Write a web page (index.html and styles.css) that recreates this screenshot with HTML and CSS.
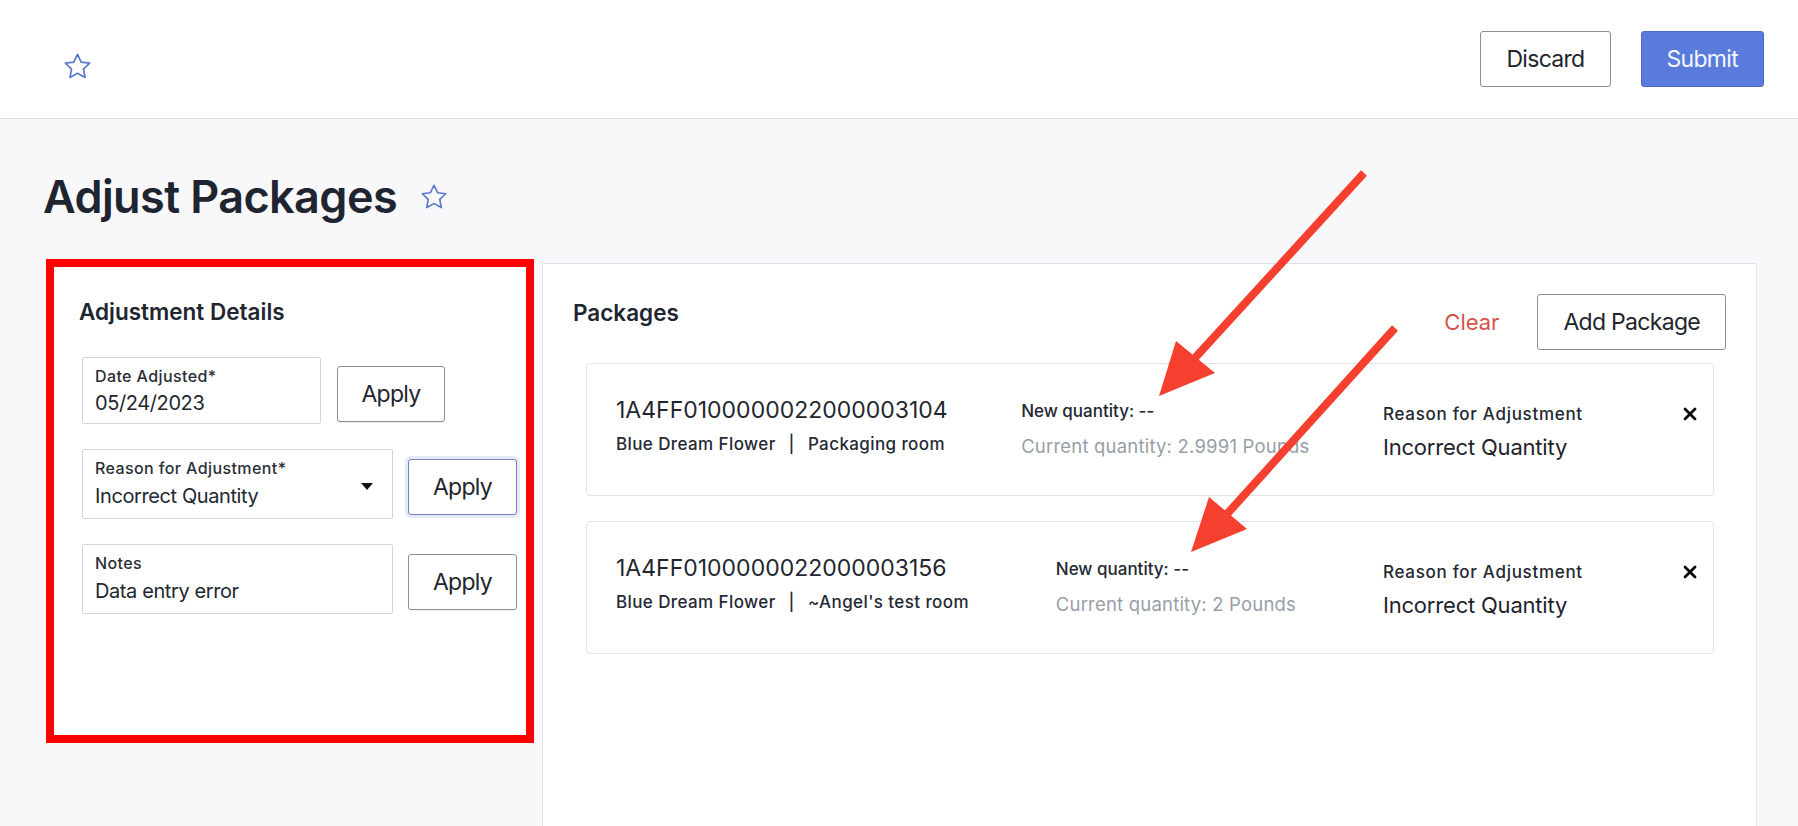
FILE: index.html
```html
<!DOCTYPE html>
<html lang="en">
<head>
<meta charset="utf-8">
<title>Adjust Packages</title>
<link rel="stylesheet" href="styles.css">
</head>
<body>
<header class="topbar">
  <button class="icon-btn topbar-star" aria-label="Favorite">
    <svg viewBox="0 0 24 24" width="31" height="31"><path class="star-path" d="M12 2.6l2.85 5.95 6.55.85-4.8 4.55 1.25 6.5L12 17.3l-5.85 3.15 1.25-6.5-4.8-4.55 6.55-.85z"/></svg>
  </button>
  <div class="topbar-actions">
    <button class="btn btn-outline">Discard</button>
    <button class="btn btn-primary">Submit</button>
  </div>
</header>

<main class="page">
  <div class="title-row">
    <h1 class="page-title">Adjust Packages</h1>
    <svg class="title-star" viewBox="0 0 24 24" width="30" height="30"><path class="star-path" d="M12 2.6l2.85 5.95 6.55.85-4.8 4.55 1.25 6.5L12 17.3l-5.85 3.15 1.25-6.5-4.8-4.55 6.55-.85z"/></svg>
  </div>

  <div class="columns">
    <section class="details-card">
      <h2 class="section-title">Adjustment Details</h2>

      <div class="field-row field-row-first">
        <div class="field field-short">
          <div class="field-label">Date Adjusted*</div>
          <div class="field-value">05/24/2023</div>
        </div>
        <button class="btn btn-apply btn-apply-narrow">Apply</button>
      </div>

      <div class="field-row">
        <div class="field field-wide field-select">
          <div class="field-label">Reason for Adjustment*</div>
          <div class="field-value">Incorrect Quantity</div>
          <span class="caret"></span>
        </div>
        <button class="btn btn-apply btn-focused">Apply</button>
      </div>

      <div class="field-row">
        <div class="field field-wide">
          <div class="field-label">Notes</div>
          <div class="field-value">Data entry error</div>
        </div>
        <button class="btn btn-apply">Apply</button>
      </div>
    </section>

    <section class="packages-panel">
      <div class="packages-head">
        <h2 class="section-title packages-title">Packages</h2>
        <div class="head-actions">
          <button class="link-clear">Clear</button>
          <button class="btn btn-outline">Add Package</button>
        </div>
      </div>

      <div class="package-list">
        <div class="package-card">
          <div class="pkg-main">
            <div class="pkg-id-block">
              <div class="pkg-id">1A4FF0100000022000003104</div>
              <div class="pkg-sub">Blue Dream Flower<span class="pkg-sep">|</span>Packaging room</div>
            </div>
            <div class="pkg-qty-block">
              <div class="pkg-new">New quantity: --</div>
              <div class="pkg-current">Current quantity: 2.9991 Pounds</div>
            </div>
            <div class="pkg-reason-block">
              <div class="pkg-reason-label">Reason for Adjustment</div>
              <div class="pkg-reason-value">Incorrect Quantity</div>
            </div>
          </div>
          <button class="icon-btn pkg-remove" aria-label="Remove">
            <svg viewBox="0 0 14 14" width="14" height="14"><path d="M2 2L12 12M12 2L2 12" class="x-path"/></svg>
          </button>
        </div>

        <div class="package-card">
          <div class="pkg-main">
            <div class="pkg-id-block">
              <div class="pkg-id">1A4FF0100000022000003156</div>
              <div class="pkg-sub">Blue Dream Flower<span class="pkg-sep">|</span>~Angel's test room</div>
            </div>
            <div class="pkg-qty-block">
              <div class="pkg-new">New quantity: --</div>
              <div class="pkg-current">Current quantity: 2 Pounds</div>
            </div>
            <div class="pkg-reason-block">
              <div class="pkg-reason-label">Reason for Adjustment</div>
              <div class="pkg-reason-value">Incorrect Quantity</div>
            </div>
          </div>
          <button class="icon-btn pkg-remove" aria-label="Remove">
            <svg viewBox="0 0 14 14" width="14" height="14"><path d="M2 2L12 12M12 2L2 12" class="x-path"/></svg>
          </button>
        </div>
      </div>
    </section>
  </div>
</main>

<svg class="annotations" viewBox="0 0 1798 826" width="1798" height="826" aria-hidden="true">
  <line x1="1364" y1="173" x2="1194" y2="359" class="arrow-shaft"/>
  <polygon points="1159,396 1176,341 1215,373" class="arrow-head"/>
  <line x1="1395" y1="328" x2="1227" y2="514" class="arrow-shaft"/>
  <polygon points="1191,552 1209,497 1247,529" class="arrow-head"/>
</svg>
</body>
</html>
```

FILE: styles.css
```css
* { box-sizing: border-box; }

html, body {
  margin: 0;
  padding: 0;
  height: 100%;
  overflow: hidden;
}

body {
  font-family: Inter, "Noto Sans", "Liberation Sans", sans-serif;
  background: #f8f8fa;
  color: #22262f;
  position: relative;
}

button {
  font-family: inherit;
  cursor: pointer;
}

.icon-btn {
  background: none;
  border: 0;
  padding: 0;
  display: flex;
  align-items: center;
  justify-content: center;
}

.star-path {
  fill: none;
  stroke: #5a78c9;
  stroke-width: 1.3;
  stroke-linejoin: round;
}

/* Top bar */
.topbar {
  height: 119px;
  background: #ffffff;
  border-bottom: 1px solid #dcdde1;
  display: flex;
  align-items: center;
  justify-content: space-between;
  padding: 0 34px 0 62px;
}

.topbar-star {
  margin-top: 14px;
}

.topbar-actions {
  display: flex;
  gap: 30px;
}

.btn {
  height: 56px;
  padding: 0 25px;
  font-size: 23px;
  font-weight: 400;
  border-radius: 3px;
  background: #ffffff;
  color: #21252d;
  border: 1px solid #8b8f96;
  letter-spacing: -0.7px;
}

.btn-primary {
  background: #5a7bdb;
  border-color: #4b69c6;
  color: #f4f6ff;
}

/* Title */
.page {
  padding: 0 41px 0 46px;
}

.title-row {
  display: flex;
  align-items: center;
  gap: 22px;
  margin-top: 50px;
  margin-left: -3px;
  height: 56px;
}

.page-title {
  margin: 0;
  font-size: 45px;
  line-height: 56px;
  font-weight: 600;
  letter-spacing: -0.6px;
  color: #1f2431;
}

/* Columns */
.columns {
  display: flex;
  align-items: flex-start;
  gap: 8px;
  margin-top: 34px;
}

.details-card {
  width: 488px;
  height: 484px;
  flex-shrink: 0;
  background: #ffffff;
  border: 8px solid #fe0000;
  padding: 32px 0 0 25px;
}

.section-title {
  margin: 0;
  font-size: 22.5px;
  line-height: 26px;
  font-weight: 600;
  color: #212530;
}

.field-row {
  display: flex;
  align-items: flex-start;
  margin-top: 25px;
  padding-left: 3px;
  gap: 15px;
}

.field-row-first {
  margin-top: 32px;
  gap: 16px;
}

.field {
  position: relative;
  height: 70px;
  border: 1px solid #d3d5da;
  border-radius: 2px;
  padding: 8px 12px 0 12px;
  background: #ffffff;
}

.field-short {
  width: 239px;
  height: 67px;
}

.field-wide {
  width: 311px;
}

.field-label {
  font-size: 16px;
  line-height: 20px;
  font-weight: 500;
  letter-spacing: 0.4px;
  color: #2a2e36;
}

.field-value {
  font-size: 20px;
  line-height: 28px;
  margin-top: 4px;
  letter-spacing: -0.4px;
  color: #23272f;
}

.field-short .field-value {
  margin-top: 3px;
}

.caret {
  position: absolute;
  right: 19px;
  top: 33px;
  width: 0;
  height: 0;
  border-left: 6px solid transparent;
  border-right: 6px solid transparent;
  border-top: 7px solid #111111;
}

.btn-apply {
  width: 109px;
  padding: 0;
  margin-top: 10px;
  height: 56px;
  box-shadow: 0 1px 1px rgba(0, 0, 0, 0.08);
}

.btn-apply-narrow {
  width: 108px;
  margin-top: 9px;
}

.btn-focused {
  border-color: #7183b9;
  box-shadow: 0 0 0 3px #e7ebf8;
}

/* Packages panel */
.packages-panel {
  flex: 1;
  height: 620px;
  margin-top: 4px;
  background: #ffffff;
  border: 1px solid #e3e4e8;
}

.packages-head {
  display: flex;
  justify-content: space-between;
  align-items: flex-start;
  padding: 30px 30px 0 30px;
}

.packages-title {
  margin-top: 6px;
}

.head-actions {
  display: flex;
  align-items: center;
  gap: 38px;
}

.link-clear {
  background: none;
  border: 0;
  padding: 0;
  font-size: 22px;
  color: #d4524b;
}

.package-list {
  display: flex;
  flex-direction: column;
  gap: 25px;
  padding: 13px 42px 0 43px;
}

.package-card {
  height: 133px;
  border: 1px solid #e1e3e7;
  border-radius: 4px;
  display: flex;
  align-items: flex-start;
  padding: 32px 16px 0 29px;
}

.pkg-main {
  flex: 1;
  display: flex;
  justify-content: space-between;
  align-items: flex-start;
}

.pkg-id {
  font-size: 23px;
  line-height: 28px;
  color: #22262f;
}

.pkg-sub {
  margin-top: 9px;
  font-size: 17px;
  line-height: 22px;
  font-weight: 500;
  letter-spacing: 0.4px;
  color: #252933;
}

.pkg-sep {
  margin: 0 13px;
}

.pkg-qty-block {
  margin-top: 4px;
}

.pkg-new {
  font-size: 17px;
  line-height: 22px;
  font-weight: 500;
  color: #23272f;
}

.pkg-current {
  margin-top: 13px;
  font-size: 18.5px;
  line-height: 22px;
  letter-spacing: 0.2px;
  color: #989ea7;
}

.pkg-reason-block {
  margin-top: 7px;
  width: 200px;
}

.pkg-reason-label {
  font-size: 17px;
  line-height: 22px;
  font-weight: 500;
  letter-spacing: 0.7px;
  color: #23272f;
}

.pkg-reason-value {
  margin-top: 8px;
  font-size: 22px;
  line-height: 28px;
  color: #1f232b;
  letter-spacing: -0.2px;
}

.pkg-remove {
  margin-left: 100px;
  margin-top: 11px;
  width: 14px;
  height: 14px;
}

.x-path {
  stroke: #0a0a0a;
  stroke-width: 2.8;
  stroke-linecap: round;
  fill: none;
}

/* Annotation overlay */
.annotations {
  position: absolute;
  top: 0;
  left: 0;
  pointer-events: none;
}

.arrow-shaft {
  stroke: #f5402f;
  stroke-width: 8;
}

.arrow-head {
  fill: #f5402f;
}
```
